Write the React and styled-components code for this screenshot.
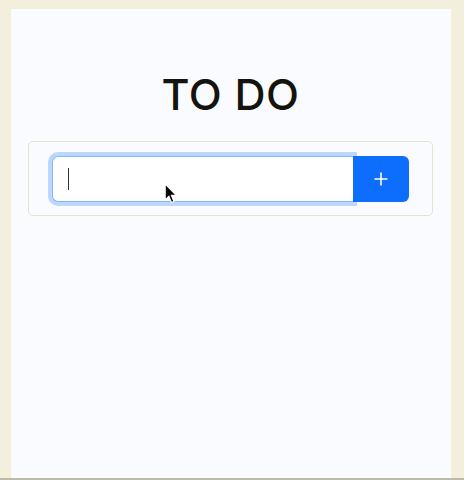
import React from 'react';
import styled, {createGlobalStyle} from 'styled-components';

const GlobalStyle = createGlobalStyle`
  html, body {
    margin: 0;
    padding: 0;
    background: #f2efdc;
  }
  body {
    font-family: Inter, "Noto Sans", sans-serif;
  }
`;

const Frame = styled.div`
  width: 464px;
  height: 480px;
  box-sizing: border-box;
  padding: 9px 13px 0 11px;
  background: #f2efdc;
  border-bottom: 2px solid #bdbaa8;
  display: flex;
`;

const Main = styled.div`
  flex: 1;
  background: #fafbfe;
  display: flex;
  flex-direction: column;
  align-items: center;
  padding: 60px 18px 0 17px;
  position: relative;
`;

const Title = styled.h1`
  margin: 0;
  font-size: 43px;
  line-height: 50px;
  font-weight: 500;
  color: #14140e;
  letter-spacing: 0.6px;
`;

const Card = styled.div`
  align-self: stretch;
  margin-top: 22px;
  padding: 14px 23px 13px 23px;
  border: 1px solid #e6e3c8;
  border-radius: 5px;
  display: flex;
`;

const Field = styled.div`
  flex: 1;
  height: 46px;
  box-sizing: border-box;
  border: 1px solid #86b7fe;
  border-right: none;
  border-radius: 6px 0 0 6px;
  background: #ffffff;
  box-shadow: 0 0 0 4px rgba(13, 110, 253, 0.25);
  display: flex;
  align-items: center;
  padding-left: 15px;
`;

const Caret = styled.span`
  width: 1px;
  height: 22px;
  background: #333;
`;

const AddButton = styled.button`
  width: 56px;
  height: 46px;
  border: none;
  border-radius: 0 6px 6px 0;
  background: #0d6efd;
  color: #fff;
  display: flex;
  align-items: center;
  justify-content: center;
  padding: 0;
  position: relative;
  z-index: 1;
`;

const Pointer = styled.svg`
  position: absolute;
  left: 153px;
  top: 174px;
  z-index: 2;
`;

const App = () => {
    return (
        <>
            <GlobalStyle/>
            <Frame>
                <Main>
                    <Title>TO DO</Title>
                    <Card>
                        <Field>
                            <Caret/>
                        </Field>
                        <AddButton>
                            <svg width="14" height="14" viewBox="0 0 14 14">
                                <path d="M7 0.5v13M0.5 7h13" stroke="#fff" strokeWidth="1.6"/>
                            </svg>
                        </AddButton>
                    </Card>
                    <Pointer width="14" height="21" viewBox="0 0 13 20">
                        <path d="M1 1 L1 16 L4.5 12.5 L7 18.5 L9.2 17.5 L6.8 11.8 L11.5 11.8 Z"
                              fill="#000" stroke="#fff" strokeWidth="1"/>
                    </Pointer>
                </Main>
            </Frame>
        </>
    );
};

export default App;
